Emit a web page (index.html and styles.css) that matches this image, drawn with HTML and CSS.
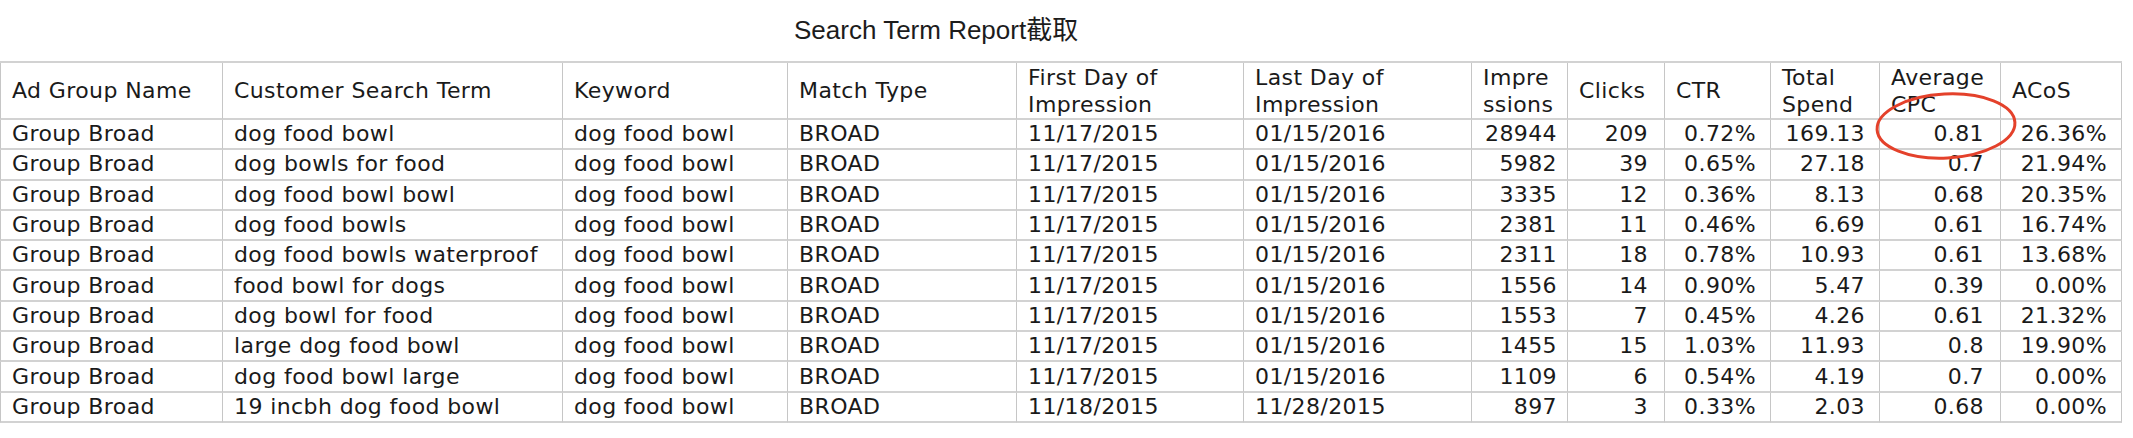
FILE: index.html
```html
<!DOCTYPE html>
<html lang="en">
<head>
<meta charset="utf-8">
<title>Search Term Report</title>
<link rel="stylesheet" href="styles.css">
</head>
<body>
<div class="page">
  <div class="title">Search Term Report截取</div>
  <table class="report">
    <colgroup>
      <col class="c-group"><col class="c-term"><col class="c-kw"><col class="c-match"><col class="c-first"><col class="c-last"><col class="c-imp"><col class="c-clicks"><col class="c-ctr"><col class="c-spend"><col class="c-cpc"><col class="c-acos">
    </colgroup>
    <thead>
      <tr>
        <th>Ad Group Name</th>
        <th>Customer Search Term</th>
        <th>Keyword</th>
        <th>Match Type</th>
        <th>First Day of<br>Impression</th>
        <th>Last Day of<br>Impression</th>
        <th>Impre<br>ssions</th>
        <th>Clicks</th>
        <th>CTR</th>
        <th>Total<br>Spend</th>
        <th>Average<br>CPC</th>
        <th>ACoS</th>
      </tr>
    </thead>
    <tbody>
      <tr><td>Group Broad</td><td>dog food bowl</td><td>dog food bowl</td><td>BROAD</td><td>11/17/2015</td><td>01/15/2016</td><td class="num imp">28944</td><td class="num clk">209</td><td class="num ctr">0.72%</td><td class="num spd">169.13</td><td class="num cpc">0.81</td><td class="num acos">26.36%</td></tr>
      <tr><td>Group Broad</td><td>dog bowls for food</td><td>dog food bowl</td><td>BROAD</td><td>11/17/2015</td><td>01/15/2016</td><td class="num imp">5982</td><td class="num clk">39</td><td class="num ctr">0.65%</td><td class="num spd">27.18</td><td class="num cpc">0.7</td><td class="num acos">21.94%</td></tr>
      <tr><td>Group Broad</td><td>dog food bowl bowl</td><td>dog food bowl</td><td>BROAD</td><td>11/17/2015</td><td>01/15/2016</td><td class="num imp">3335</td><td class="num clk">12</td><td class="num ctr">0.36%</td><td class="num spd">8.13</td><td class="num cpc">0.68</td><td class="num acos">20.35%</td></tr>
      <tr><td>Group Broad</td><td>dog food bowls</td><td>dog food bowl</td><td>BROAD</td><td>11/17/2015</td><td>01/15/2016</td><td class="num imp">2381</td><td class="num clk">11</td><td class="num ctr">0.46%</td><td class="num spd">6.69</td><td class="num cpc">0.61</td><td class="num acos">16.74%</td></tr>
      <tr><td>Group Broad</td><td>dog food bowls waterproof</td><td>dog food bowl</td><td>BROAD</td><td>11/17/2015</td><td>01/15/2016</td><td class="num imp">2311</td><td class="num clk">18</td><td class="num ctr">0.78%</td><td class="num spd">10.93</td><td class="num cpc">0.61</td><td class="num acos">13.68%</td></tr>
      <tr><td>Group Broad</td><td>food bowl for dogs</td><td>dog food bowl</td><td>BROAD</td><td>11/17/2015</td><td>01/15/2016</td><td class="num imp">1556</td><td class="num clk">14</td><td class="num ctr">0.90%</td><td class="num spd">5.47</td><td class="num cpc">0.39</td><td class="num acos">0.00%</td></tr>
      <tr><td>Group Broad</td><td>dog bowl for food</td><td>dog food bowl</td><td>BROAD</td><td>11/17/2015</td><td>01/15/2016</td><td class="num imp">1553</td><td class="num clk">7</td><td class="num ctr">0.45%</td><td class="num spd">4.26</td><td class="num cpc">0.61</td><td class="num acos">21.32%</td></tr>
      <tr><td>Group Broad</td><td>large dog food bowl</td><td>dog food bowl</td><td>BROAD</td><td>11/17/2015</td><td>01/15/2016</td><td class="num imp">1455</td><td class="num clk">15</td><td class="num ctr">1.03%</td><td class="num spd">11.93</td><td class="num cpc">0.8</td><td class="num acos">19.90%</td></tr>
      <tr><td>Group Broad</td><td>dog food bowl large</td><td>dog food bowl</td><td>BROAD</td><td>11/17/2015</td><td>01/15/2016</td><td class="num imp">1109</td><td class="num clk">6</td><td class="num ctr">0.54%</td><td class="num spd">4.19</td><td class="num cpc">0.7</td><td class="num acos">0.00%</td></tr>
      <tr><td>Group Broad</td><td>19 incbh dog food bowl</td><td>dog food bowl</td><td>BROAD</td><td>11/18/2015</td><td>11/28/2015</td><td class="num imp">897</td><td class="num clk">3</td><td class="num ctr">0.33%</td><td class="num spd">2.03</td><td class="num cpc">0.68</td><td class="num acos">0.00%</td></tr>
    </tbody>
  </table>
  <svg class="mark" width="160" height="80" viewBox="0 0 160 80" aria-hidden="true">
    <ellipse cx="80" cy="40" rx="69" ry="32" fill="none" stroke="#e4412b" stroke-width="3" transform="rotate(-3 80 40)"/>
  </svg>
</div>
</body>
</html>
```

FILE: styles.css
```css
html, body {
  margin: 0;
  padding: 0;
  background: #ffffff;
}

.page {
  position: relative;
  width: 2133px;
  height: 438px;
}

.title {
  height: 61px;
  box-sizing: border-box;
  padding: 15px 0 0 794px;
  font-family: "Liberation Sans", "Noto Sans CJK SC", sans-serif;
  font-size: 26px;
  line-height: 30px;
  color: #1c1c1c;
}

.report {
  table-layout: fixed;
  border-collapse: separate;
  border-spacing: 0;
  width: 2122px;
  border-top: 2px solid #d2d2d2;
  font-family: "DejaVu Sans", Verdana, sans-serif;
  font-size: 22px;
  letter-spacing: 0.4px;
  color: #1a1a1a;
}

.c-group { width: 223px; }
.c-term { width: 340px; }
.c-kw { width: 225px; }
.c-match { width: 229px; }
.c-first { width: 227px; }
.c-last { width: 228px; }
.c-imp { width: 96px; }
.c-clicks { width: 97px; }
.c-ctr { width: 106px; }
.c-spend { width: 109px; }
.c-cpc { width: 121px; }
.c-acos { width: 121px; }

.report th,
.report td {
  padding: 0 4px 0 11px;
  border-right: 1px solid #c6c6c6;
  border-bottom: 2px solid #d2d2d2;
  text-align: left;
  vertical-align: middle;
  white-space: nowrap;
  overflow: hidden;
}

.report th:first-child,
.report td:first-child {
  border-left: 1px solid #c6c6c6;
}

.report th {
  font-weight: normal;
  line-height: 27px;
}

.report thead tr {
  height: 57px;
}

.report tbody tr {
  height: 30.3px;
}

.report td {
  line-height: 26px;
}

.report td.num {
  text-align: right;
  padding-left: 4px;
}

.report td.imp { padding-right: 10px; }
.report td.clk { padding-right: 16px; }
.report td.ctr { padding-right: 14px; }
.report td.spd { padding-right: 14px; }
.report td.cpc { padding-right: 16px; }
.report td.acos { padding-right: 14px; }

.mark {
  position: absolute;
  left: 1866px;
  top: 86px;
}
```
